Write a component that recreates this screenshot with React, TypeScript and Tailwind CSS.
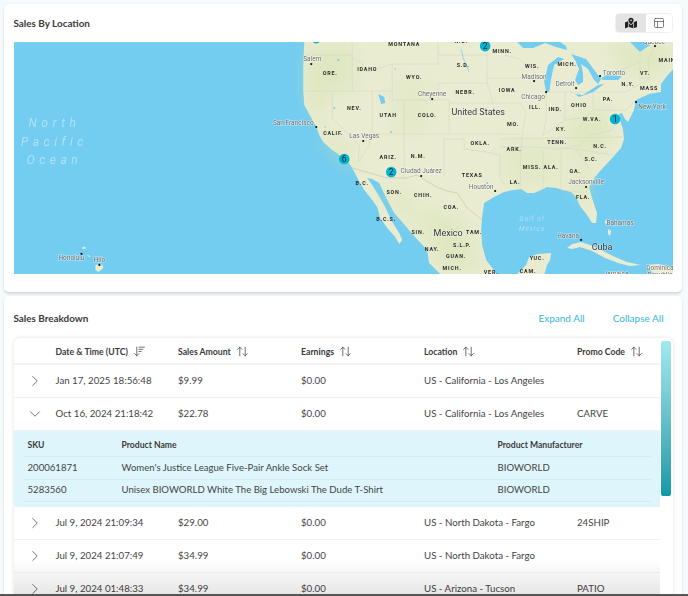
import { ArrowDownWideNarrow, ArrowUpDown, ChevronDown, ChevronRight, PanelsTopLeft } from "lucide-react";
import { FaMapMarkedAlt } from "react-icons/fa";

const states: [string, number, number][] = [
  ["MONTANA", 404, 46], ["N.D.", 461, 43], ["MINN.", 502, 53], ["ORE.", 330, 75], ["IDAHO", 367, 71], ["WYO.", 414, 79],
  ["S.D.", 463, 67], ["WIS.", 532, 68], ["MICH.", 567, 66], ["VT.", 645, 75], ["MAIN", 667, 62], ["N.Y.", 628, 86],
  ["MASS", 649, 90], ["NEBR.", 465, 94], ["IOWA", 507, 92], ["PA.", 608, 101], ["NEV.", 354, 110], ["UTAH", 388, 117],
  ["COLO.", 427, 117], ["ILL.", 535, 109], ["IND.", 555, 111], ["OHIO", 579, 107], ["W.VA.", 592, 121], ["MO.", 513, 126],
  ["KY.", 561, 131], ["TENN.", 557, 144], ["N.C.", 600, 148], ["OKLA.", 480, 145], ["ARK.", 514, 151], ["ARIZ.", 388, 159],
  ["N.M.", 418, 158], ["CALIF.", 333, 135], ["S.C.", 591, 161], ["GA.", 575, 173], ["ALA.", 551, 169], ["MISS.", 532, 169],
  ["LA.", 515, 184], ["TEXAS", 472, 177], ["FLA.", 583, 199], ["B.C.", 362, 185], ["SON.", 394, 194], ["CHIH.", 423, 197],
  ["COA.", 451, 209], ["B.C.S.", 386, 221], ["SIN.", 418, 234], ["TAM.", 474, 234], ["S.L.P.", 462, 247], ["NAY.", 432, 251],
  ["GUAN.", 456, 258], ["MICH.", 452, 270], ["VER.", 491, 274], ["YUC.", 537, 260], ["CAM.", 528, 273],
];

const cities: [string, number, number, number, number][] = [
  ["Salem", 312, 61, 311, 64], ["San Francisco", 293, 125, 316, 127], ["Las Vegas", 364, 138, 363, 141],
  ["Cheyenne", 432, 96, 432, 99], ["Ciudad Juárez", 421, 173, 421, 176], ["Houston", 481, 189, 495, 191],
  ["Jacksonville", 586, 184, 586, 187], ["Madison", 534, 79, 534, 81], ["Chicago", 533, 99, 546, 92],
  ["Detroit", 565, 86, 576, 88], ["Toronto", 614, 75, 600, 76], ["New York", 652, 109, 636, 102],
  ["Honolulu", 71, 260, 81, 254], ["Hilo", 99, 262, 99, 265], ["Havana", 568, 238, 581, 240],
  ["Bahamas", 620, 225, 0, 0], ["Quebec", 654, 44, 655, 46], ["Jamaica", 616, 276, 0, 0],
  ["Dominica", 660, 270, 0, 0], ["Republic", 660, 277, 0, 0],
];

const markers: [string, number, number][] = [["", 316, 38], ["2", 485, 46], ["1", 615, 119], ["6", 344, 159], ["2", 391, 172]];

function SalesMap() {
  return (
    <svg viewBox="13.5 42 659.5 232" className="block h-full w-full" style={{ fontFamily: "Roboto, sans-serif" }}>
      <defs>
        <filter id="soft" x="-20%" y="-20%" width="140%" height="140%">
          <feGaussianBlur stdDeviation="8" />
        </filter>
      </defs>
      <rect x="13" y="42" width="661" height="233" fill="#73cdf0" />
      <path
        fill="#e9ecd1"
        d="M304 42 303 65 303 91 304 105 311 118 316 127 319 135 323 142 332 150 339 155 348 162 352 168 357 178 364 190 372 200 377 207 380 218 387 228 395 237 399 244 402 240 399 233 391 220 385 207 377 193 372 185 367 178 372 179 379 183 386 198 394 213 402 222 413 235 427 250 429 263 436 270 441 275 497 275 490 265 486 260 482 245 481 230 482 217 484 203 494 197 504 192 513 190 521 189 527 193 534 193 541 190 547 187 556 188 571 192 576 197 580 206 587 215 592 223 596 223 597 213 592 198 589 187 595 177 601 170 613 157 621 148 624 139 623 130 619 114 624 118 628 122 634 110 636 100 649 94 661 92 661 84 667 76 674 68 674 42Z"
      />
      <g filter="url(#soft)" fill="#d3e2ae" opacity="0.45">
        <path d="M306 48 350 45 356 88 330 92 318 120 306 100Z" />
        <path d="M320 125 345 150 360 170 345 165 325 145Z" />
        <path d="M395 80 430 80 425 130 395 130Z" opacity="0.5" />
        <path d="M565 122 605 105 612 145 575 160Z" />
        <path d="M570 175 590 170 590 205 575 195Z" />
        <path d="M420 205 465 225 480 270 440 268Z" />
        <path d="M505 140 560 150 550 185 510 185Z" opacity="0.7" />
        <path d="M610 45 670 45 660 75 625 70Z" />
        <path d="M375 190 410 190 425 240 400 215Z" opacity="0.6" />
      </g>
      <g fill="#e9ecd1">
        <path d="M529 257 538 254 551 253 550 260 547 265 544 275 511 275 517 274 521 270 526 265Z" />
        <path d="M567 248 572 244 581 242 590 245 601 250 615 257 627 262 641 265 630 266 618 263 605 258 592 251 580 247 572 249Z" />
        <path d="M646 265 658 264 673 267 674 275 655 275 650 270Z" />
        <path d="M610 272 622 272 622 275 610 275Z" />
        <path d="M95 265 101 264 103 268 98 272 95 270Z" />
        <path d="M82 247 85 247 85 249 82 249Z" />
        <path d="M87 255 90 256 89 257 87 256Z" />
        <path d="M608 229 611 231 610 236 608 234Z" />
        <path d="M605 220 607 221 607 224 605 223Z" />
      </g>
      <g fill="none" stroke="#d6d6c6" strokeWidth="0.6">
        <path d="M303 55H352V42M303 91H391M332 91V118L359 145 358 162M352 55V91M372 91V134M352 58 361 62 367 72 392 64H438V42M392 64V100H438V83H487M438 55H487M372 134H449M370 134 369 145 358 162M404 100V178M449 103V134M438 100H449V103H520L526 112 523 128 521 147H500M449 134H520M444 139V177M444 139H464V149L486 152 500 155 500 178 505 185" />
        <path d="M487 42 487 83 493 103M487 78H544L548 92M504 55 517 58 530 66 540 80M546 92V120L543 135M565 92V120M546 92H593V110H626M565 120 586 117 593 110M593 92H626L650 78 648 60 655 45M543 135 565 120M499 139 623 137M500 147H529L576 149 613 155M543 150V188M561 150V190 L579 192M576 149 590 170M521 147 520 190M608 75 640 62 640 78 650 78M626 110 636 100M620 114 612 130 590 135 580 145 553 150" />
        <path d="M352 168 359 170 387 178 406 178 417 175 436 187 447 191 457 193 467 208 482 220" stroke="#c4c1ab" />
      </g>
      <g fill="#73cdf0">
        <path d="M517 42 523 48 533 48 545 43 556 47 567 50 566 46 560 42Z" />
        <path d="M546 92 544 82 548 65 558 57 564 59 554 65 551 79 549 92Z" />
        <path d="M571 54 586 59 601 79 598 84 594 80 588 69 581 64 583 74 583 82 578 85 575 80 579 69 575 60Z" />
        <path d="M575 94 583 95 598 85 604 84 593 92 579 97Z" />
        <path d="M600 79 606 75 622 76 618 80 604 80Z" />
        <path d="M619 114 622 113 626 122 624 128 621 124Z" />
        <path d="M378 94 384 97 385 103 381 104Z" />
        <path d="M630 42 640 52 650 45 645 42Z" />
        <path d="M636 102 650 96 640 102Z" />
        <circle cx="338" cy="60" r="1" />
        <circle cx="395" cy="69" r="0.8" />
        <circle cx="334" cy="108" r="1" />
        <circle cx="325" cy="127" r="0.8" />
        <circle cx="391" cy="132" r="0.9" />
        <circle cx="487" cy="183" r="1" />
        <circle cx="535" cy="194" r="1.2" />
      </g>
      <path d="M461 49 463 58 469 72" fill="none" stroke="#73cdf0" strokeWidth="0.7" />
      <g fill="#ffffff" opacity="0.42" fontStyle="italic" textAnchor="middle" fontSize="12" letterSpacing="4.5">
        <text x="54" y="127">North</text>
        <text x="54" y="146">Pacific</text>
        <text x="54" y="164">Ocean</text>
      </g>
      <g fill="#ffffff" opacity="0.4" fontStyle="italic" textAnchor="middle" fontSize="6.5" letterSpacing="1">
        <text x="532" y="221">Gulf of</text>
        <text x="532" y="231">Mexico</text>
      </g>
      <g fill="#2b2b2b" fontWeight="700" fontSize="5.4" letterSpacing="0.8" textAnchor="middle">
        {states.map(([t, x, y], i) => (
          <text key={i} x={x} y={y}>{t}</text>
        ))}
      </g>
      <g>
        {cities.filter((c) => c[3] > 0).map((c, i) => (
          <circle key={i} cx={c[3]} cy={c[4]} r="1.1" fill="#111" />
        ))}
      </g>
      <g fill="#6b6b6b" fontSize="6.5" textAnchor="middle" stroke="#ffffff" strokeOpacity="0.55" strokeWidth="1.2" style={{ paintOrder: "stroke" }}>
        {cities.map(([t, x, y], i) => (
          <text key={i} x={x} y={y}>{t}</text>
        ))}
      </g>
      <g fill="#333" fontSize="9" textAnchor="middle" stroke="#ffffff" strokeOpacity="0.5" strokeWidth="1" style={{ paintOrder: "stroke" }}>
        <text x="478" y="115">United States</text>
        <text x="448" y="236">Mexico</text>
        <text x="602" y="250">Cuba</text>
      </g>
      {markers.map(([t, x, y], i) => (
        <g key={i}>
          <circle cx={x} cy={y} r="5.3" fill="#02b3cf" />
          <text x={x} y={y + 3} textAnchor="middle" fontSize="8.5" fill="#123">{t}</text>
        </g>
      ))}
    </svg>
  );
}

const cols = "grid grid-cols-[42px_122.5px_123px_123px_153px_1fr] items-center";

function Head({ label, icon = false }: { label: string; icon?: boolean }) {
  return (
    <div className="flex items-center gap-[5px] text-[8.7px] font-bold text-[#3a3a3a]">
      <span>{label}</span>
      {icon ? (
        <ArrowDownWideNarrow size={13} strokeWidth={1.4} className="text-[#444]" />
      ) : (
        <ArrowUpDown size={13} strokeWidth={1.4} className="text-[#444]" />
      )}
    </div>
  );
}

function Row({ date, amount, loc, code, open = false }: { date: string; amount: string; loc: string; code: string; open?: boolean }) {
  return (
    <div className={`${cols} h-[33px] shrink-0 border-b border-[#f1f1f1] pb-[1px] text-[9.7px] text-[#444]`}>
      <div className="flex justify-center text-[#555]">
        {open ? <ChevronDown size={18} strokeWidth={1.1} /> : <ChevronRight size={18} strokeWidth={1.1} />}
      </div>
      <div>{date}</div>
      <div>{amount}</div>
      <div>$0.00</div>
      <div>{loc}</div>
      <div>{code}</div>
    </div>
  );
}

const subCols = "grid grid-cols-[94px_376px_1fr] items-center px-[5px]";

export default function App() {
  return (
    <div
      className="relative h-[596px] w-[688px] overflow-hidden bg-[#f5fbfd] pt-[4px] pr-[6px] pl-[4px] text-[#3a3a3a]"
      style={{ fontFamily: "Lato, 'Noto Sans', sans-serif" }}
    >
      <section className="flex h-[289px] flex-col rounded-[5px] border-b border-[#d8d8d8] bg-white px-[9.5px] shadow-sm">
        <header className="flex h-[38px] shrink-0 items-center justify-between">
          <h2 className="text-[9.9px] font-bold text-[#3a3a3a]">Sales By Location</h2>
          <div className="mt-[-1px] flex h-[20px] w-[58px] overflow-hidden rounded-[4px] border border-[#f0f0f0]">
            <div className="flex w-[30px] items-center justify-center bg-[#e4e4e4] text-[#222]">
              <FaMapMarkedAlt size={12} />
            </div>
            <div className="flex flex-1 items-center justify-center bg-white text-[#444]">
              <PanelsTopLeft size={12} strokeWidth={1.3} />
            </div>
          </div>
        </header>
        <div className="h-[232px] shrink-0">
          <SalesMap />
        </div>
      </section>

      <section className="mt-[3px] h-[400px] rounded-[5px] bg-white px-[9.5px] shadow-sm">
        <header className="flex h-[42px] items-center justify-between pt-[2px]">
          <h2 className="text-[9.9px] font-bold text-[#3a3a3a]">Sales Breakdown</h2>
          <div className="flex gap-[28px] pr-[9px] text-[10px] text-[#35b6d3]">
            <span>Expand All</span>
            <span>Collapse All</span>
          </div>
        </header>
        <div className="relative h-[300px] rounded-[6px] pt-px shadow-[0_0_4px_rgba(0,0,0,0.12)]">
          <div className="w-[646px]">
            <div className={`${cols} h-[26px] border-b-2 border-[#f3f3f3] pt-[2px]`}>
              <div />
              <Head label="Date & Time (UTC)" icon />
              <Head label="Sales Amount" />
              <Head label="Earnings" />
              <Head label="Location" />
              <Head label="Promo Code" />
            </div>
            <Row date="Jan 17, 2025 18:56:48" amount="$9.99" loc="US - California - Los Angeles" code="" />
            <Row date="Oct 16, 2024 21:18:42" amount="$22.78" loc="US - California - Los Angeles" code="CARVE" open />
            <div className="h-[76px] bg-[#def6fb] px-[9px] text-[9.6px] text-[#444]">
              <div className={`${subCols} h-[26px] border-b border-[#d2edf2] pt-[4px] text-[8.6px] font-bold text-[#3a3a3a]`}>
                <div>SKU</div>
                <div>Product Name</div>
                <div>Product Manufacturer</div>
              </div>
              <div className={`${subCols} h-[22.5px] border-b border-[#d2edf2]`}>
                <div>200061871</div>
                <div>Women's Justice League Five-Pair Ankle Sock Set</div>
                <div>BIOWORLD</div>
              </div>
              <div className={`${subCols} h-[22.5px] border-b border-[#d2edf2]`}>
                <div>5283560</div>
                <div>Unisex BIOWORLD White The Big Lebowski The Dude T-Shirt</div>
                <div>BIOWORLD</div>
              </div>
            </div>
            <Row date="Jul 9, 2024 21:09:34" amount="$29.00" loc="US - North Dakota - Fargo" code="24SHIP" />
            <Row date="Jul 9, 2024 21:07:49" amount="$34.99" loc="US - North Dakota - Fargo" code="" />
            <Row date="Jul 9, 2024 01:48:33" amount="$34.99" loc="US - Arizona - Tucson" code="PATIO" />
          </div>
          <div className="absolute top-[3px] right-[2px] h-[155px] w-[10px] rounded-[2px] bg-linear-to-b from-[#a3e8f0] to-[#0a99a8]" />
          <div className="absolute top-[222px] left-0 h-[36px] w-[646px] bg-linear-to-b from-transparent to-black/10" />
        </div>
      </section>
      <div className="absolute right-0 bottom-0 left-0 h-[2px] bg-[#555]" />
    </div>
  );
}
